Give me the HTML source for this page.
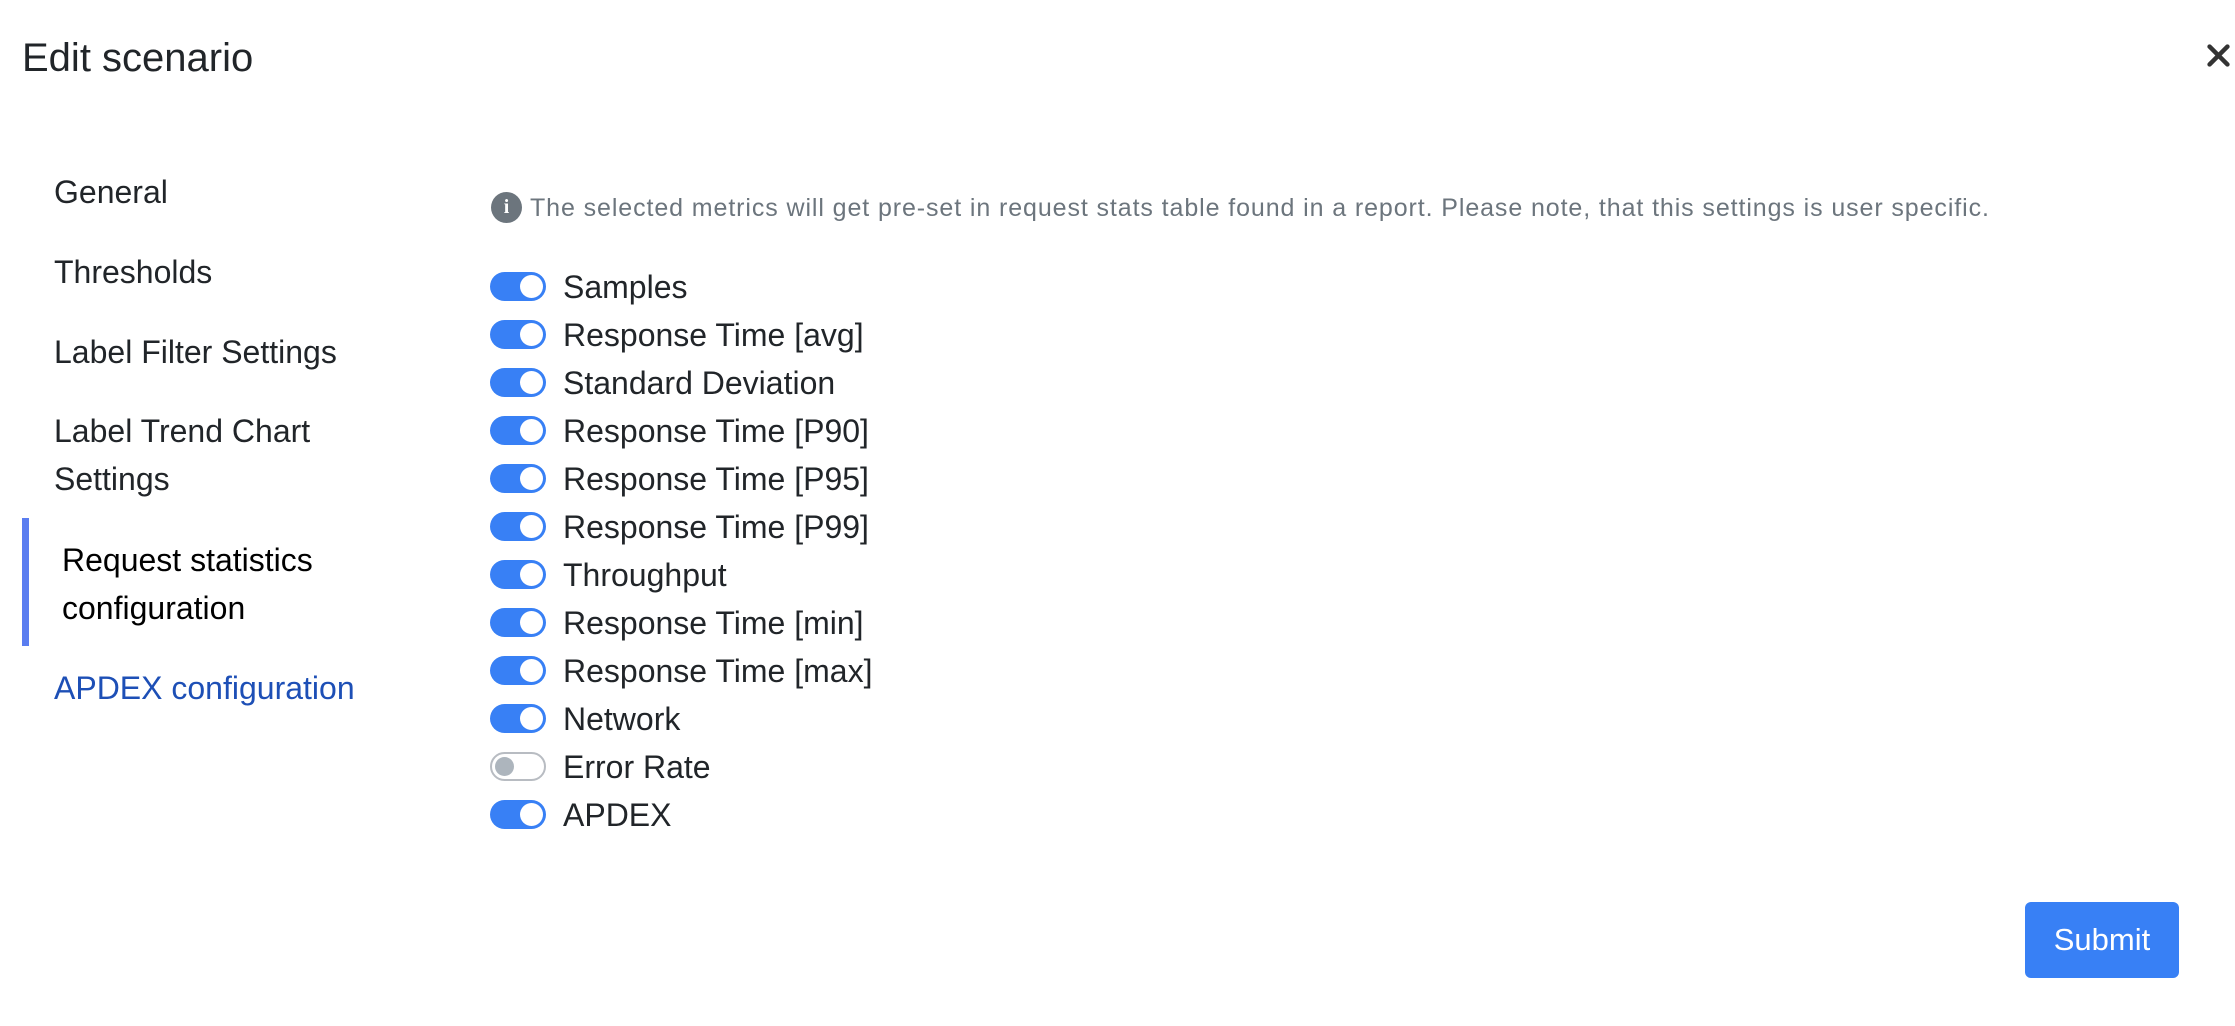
<!DOCTYPE html>
<html><head><meta charset="utf-8"><style>
*{margin:0;padding:0;box-sizing:border-box}
body{width:2235px;height:1026px;background:#fff;font-family:"Liberation Sans",sans-serif;color:#212529;position:relative;overflow:hidden}
h1{position:absolute;left:22px;top:34px;font-size:40px;font-weight:400;line-height:48px;color:#212529}
.x{position:absolute;left:2206px;top:43px}
.nav{position:absolute;left:54px;font-size:32px;line-height:48px;color:#212529}
.bar{position:absolute;left:22px;top:518px;width:7px;height:128px;background:#5a7df0}
.info{position:absolute;left:530px;top:194px;font-size:25px;color:#6c757d;line-height:28px;white-space:nowrap;letter-spacing:0.9px}
.ic{position:absolute;left:491px;top:192px;width:31px;height:31px;border-radius:50%;background:#6c757d;color:#fff;font:bold 20px/31px "Liberation Serif",serif;text-align:center}
.tg{position:absolute;left:490px;width:56px;height:29px;border-radius:15px;background:#3880f5}
.tg::after{content:"";position:absolute;right:3px;top:3px;width:23px;height:23px;border-radius:50%;background:#fff}
.tg.off{background:#fff;border:2px solid #b8bcc2}
.tg.off::after{left:3px;top:3px;right:auto;width:19px;height:19px;background:#adb5bd}
.lb{position:absolute;left:563px;font-size:32px;line-height:48px;color:#212529;white-space:nowrap}
.btn{position:absolute;left:2025px;top:902px;width:154px;height:76px;border-radius:6px;background:#3880f5;color:#fff;font-size:31px;line-height:76px;text-align:center}
</style></head><body>
<h1>Edit scenario</h1>
<svg class="x" width="25" height="25" viewBox="0 0 28 28"><path d="M4 4L24 24M24 4L4 24" stroke="#333" stroke-width="5" stroke-linecap="round"/></svg>
<div class="nav" style="top:168px">General</div>
<div class="nav" style="top:248px">Thresholds</div>
<div class="nav" style="top:328px">Label Filter Settings</div>
<div class="nav" style="top:407px">Label Trend Chart<br>Settings</div>
<div class="bar"></div>
<div class="nav" style="top:536px;left:62px;color:#000;font-weight:500">Request statistics<br>configuration</div>
<div class="nav" style="top:664px;color:#1d4fb6">APDEX configuration</div>
<div class="ic">i</div>
<div class="info">The selected metrics will get pre-set in request stats table found in a report. Please note, that this settings is user specific.</div>

<div class="tg" style="top:272px"></div><div class="lb" style="top:263px">Samples</div>
<div class="tg" style="top:320px"></div><div class="lb" style="top:311px">Response Time [avg]</div>
<div class="tg" style="top:368px"></div><div class="lb" style="top:359px">Standard Deviation</div>
<div class="tg" style="top:416px"></div><div class="lb" style="top:407px">Response Time [P90]</div>
<div class="tg" style="top:464px"></div><div class="lb" style="top:455px">Response Time [P95]</div>
<div class="tg" style="top:512px"></div><div class="lb" style="top:503px">Response Time [P99]</div>
<div class="tg" style="top:560px"></div><div class="lb" style="top:551px">Throughput</div>
<div class="tg" style="top:608px"></div><div class="lb" style="top:599px">Response Time [min]</div>
<div class="tg" style="top:656px"></div><div class="lb" style="top:647px">Response Time [max]</div>
<div class="tg" style="top:704px"></div><div class="lb" style="top:695px">Network</div>
<div class="tg off" style="top:752px"></div><div class="lb" style="top:743px">Error Rate</div>
<div class="tg" style="top:800px"></div><div class="lb" style="top:791px">APDEX</div>

<div class="btn">Submit</div>
</body></html>
